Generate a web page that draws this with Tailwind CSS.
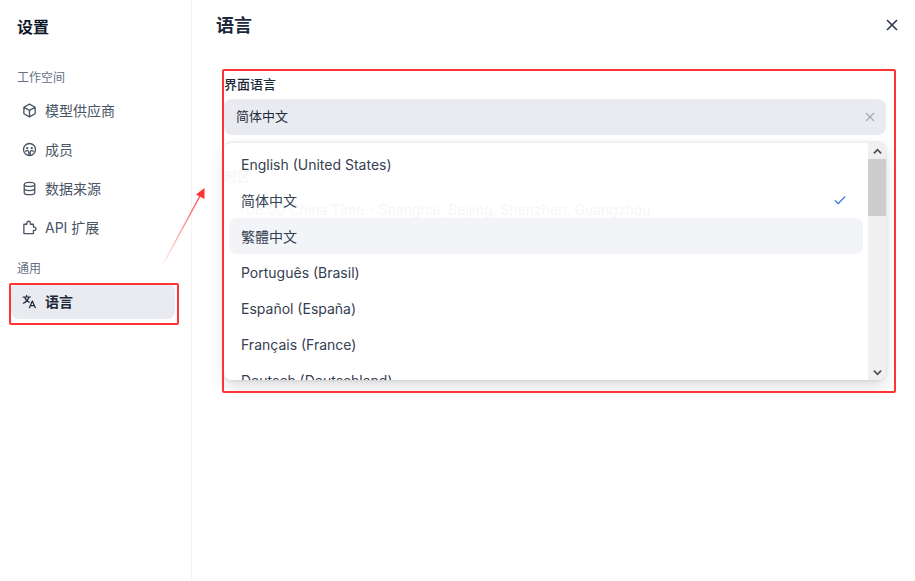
<!DOCTYPE html>
<html lang="zh">
<head>
<meta charset="utf-8">
<script src="https://cdn.jsdelivr.net/npm/@tailwindcss/browser@4"></script>
</head>
<body class="bg-white">
<div class="relative flex h-[581px] w-[915px] overflow-hidden bg-white font-['Inter','Noto_Sans_CJK_SC',sans-serif] text-[#354052]">
  <!-- sidebar -->
  <aside class="flex w-[192px] shrink-0 flex-col border-r border-[#f2f4f7] pl-[12px] pr-[16px]">
    <h2 class="mt-[16px] ml-[5px] text-[16px] leading-[22px] font-semibold text-[#101828]">设置</h2>
    <div class="mt-[30px] ml-[5px] text-[12px] leading-[20px] text-[#667085]">工作空间</div>
    <nav class="mt-[4px] flex flex-col gap-[3px]">
      <a class="flex h-[36px] items-center gap-[8px] pl-[10px] text-[14px] text-[#495464]">
        <svg class="size-[15px] shrink-0" viewBox="0 0 16 16" fill="none" stroke="#495464" stroke-width="1.4" stroke-linejoin="round"><path d="M8 1.2l6 3.3v7L8 14.8l-6-3.3v-7zM2 4.5l6 3.4 6-3.4M8 7.9v6.9"/></svg>
        <span>模型供应商</span>
      </a>
      <a class="flex h-[36px] items-center gap-[8px] pl-[10px] text-[14px] text-[#495464]">
        <svg class="size-[15px] shrink-0" viewBox="0 0 16 16" fill="none" stroke="#495464" stroke-width="1.4"><circle cx="8" cy="8" r="6.4"/><circle cx="5.6" cy="6.6" r="1.2" fill="#495464" stroke="none"/><circle cx="10.4" cy="6.6" r="1.2" fill="#495464" stroke="none"/><path d="M3.4 10.2c1.5-1.3 2.6-1.3 3.4-.6.5.5.5 3 .3 4.6M12.6 10.2c-1.5-1.3-2.6-1.3-3.4-.6-.5.5-.5 3-.3 4.6"/></svg>
        <span>成员</span>
      </a>
      <a class="flex h-[36px] items-center gap-[8px] pl-[10px] text-[14px] text-[#495464]">
        <svg class="size-[15px] shrink-0" viewBox="0 0 16 16" fill="none" stroke="#495464" stroke-width="1.4"><ellipse cx="8" cy="3.6" rx="5.6" ry="2.2"/><path d="M2.4 3.6v8.8c0 1.2 2.5 2.2 5.6 2.2s5.6-1 5.6-2.2V3.6M2.4 8c0 1.2 2.5 2.2 5.6 2.2s5.6-1 5.6-2.2"/></svg>
        <span>数据来源</span>
      </a>
      <a class="flex h-[36px] items-center gap-[8px] pl-[10px] text-[14px] text-[#495464]">
        <svg class="size-[15px] shrink-0" viewBox="0 0 16 16" fill="none" stroke="#495464" stroke-width="1.4" stroke-linejoin="round"><path d="M2 4.5h3.2V3.2a1.9 1.9 0 013.8 0v1.3h3.2v3h1a1.8 1.8 0 010 3.6h-1v3.4H2z"/></svg>
        <span>API 扩展</span>
      </a>
    </nav>
    <div class="mt-[14px] ml-[5px] text-[12px] leading-[20px] text-[#667085]">通用</div>
    <a class="mt-[4px] flex h-[36px] w-[164px] -ml-[1px] items-center gap-[8px] rounded-[8px] bg-[#e9ebf0] pl-[11px] text-[14px] font-semibold text-[#1d2939]">
      <svg class="size-[15px] shrink-0" viewBox="0 0 16 16" fill="none" stroke="#1d2939" stroke-width="1.3" stroke-linecap="round" stroke-linejoin="round"><path d="M1 3.2h8M5 1.4v1.8M7.4 3.2C6.6 6.2 4.2 8.6 1.4 9.8M2.8 3.2c.8 2.6 2.6 4.6 5 5.6M8 14.6l3-7.2 3.2 7.2M9 12.4h4.2"/></svg>
      <span>语言</span>
    </a>
  </aside>

  <!-- main -->
  <main class="relative flex-1 pl-[24px] pr-[29px]">
    <h1 class="mt-[14px] text-[18px] leading-[24px] font-semibold text-[#1d2939]">语言</h1>
    <div class="mt-[36px] ml-[8px]">
      <label class="block text-[13px] leading-[20px] font-medium text-[#1d2939]">界面语言</label>
      <div class="mt-[5px] flex h-[36px] items-center justify-between rounded-[8px] bg-[#e9ebf0] pl-[12px] pr-[11px] text-[13px] text-[#1d2939]">
        <span>简体中文</span>
        <svg class="size-[10px]" viewBox="0 0 10 10" fill="none" stroke="#a4a7ae" stroke-width="1.1"><path d="M1 1l8 8M9 1l-8 8"/></svg>
      </div>
      <div class="mt-[31px] text-[13px] leading-[20px] font-medium text-[#1d2939]">时区</div>
      <div class="mt-[14px] pl-[13px] text-[14px] leading-[20px] text-[#354052]">+08:00 China Time - Shanghai, Beijing, Shenzhen, Guangzhou</div>
    </div>
    <!-- dropdown -->
    <div class="absolute top-[141px] left-[32px] flex h-[239px] w-[662px] overflow-hidden rounded-[8px] border-t-2 border-[#f0f0f0] bg-white/95 shadow-[0_8px_16px_rgba(0,0,0,0.12),0_1px_3px_rgba(0,0,0,0.1)]">
      <ul class="flex-1 overflow-hidden px-[5px] pt-[3px] text-[14px] text-[#354052]">
        <li class="flex h-[36px] shrink-0 items-center px-[12px]">English (United States)</li>
        <li class="flex h-[36px] shrink-0 items-center justify-between px-[12px] pr-[16px]">
          <span>简体中文</span>
          <svg class="size-[14px]" viewBox="0 0 14 14" fill="none" stroke="#1f6feb" stroke-width="1.3"><path d="M2 7.4l3.2 3.2L12 3.6"/></svg>
        </li>
        <li class="flex h-[36px] shrink-0 items-center rounded-[8px] bg-[#f2f4f7] px-[12px]">繁體中文</li>
        <li class="flex h-[36px] shrink-0 items-center px-[12px]">Português (Brasil)</li>
        <li class="flex h-[36px] shrink-0 items-center px-[12px]">Español (España)</li>
        <li class="flex h-[36px] shrink-0 items-center px-[12px]">Français (France)</li>
        <li class="flex h-[36px] shrink-0 items-center px-[12px]">Deutsch (Deutschland)</li>
      </ul>
      <div class="flex w-[18px] shrink-0 flex-col bg-[#f0f0f0]">
        <div class="flex h-[16px] shrink-0 items-center justify-center">
          <svg class="size-[9px]" viewBox="0 0 10 10" fill="none" stroke="#505050" stroke-width="2"><path d="M1 7l4-4 4 4"/></svg>
        </div>
        <div class="h-[57px] shrink-0 bg-[#cdcdcd]"></div>
        <div class="flex-1"></div>
        <div class="flex h-[16px] shrink-0 items-center justify-center">
          <svg class="size-[9px]" viewBox="0 0 10 10" fill="none" stroke="#505050" stroke-width="2"><path d="M1 3l4 4 4-4"/></svg>
        </div>
      </div>
    </div>
  </main>

  <!-- close -->
  <button class="absolute top-[17px] right-[15px] flex size-[16px] items-center justify-center">
    <svg class="size-[12px]" viewBox="0 0 12 12" fill="none" stroke="#354052" stroke-width="1.7"><path d="M1 1l10 10M11 1L1 11"/></svg>
  </button>

  <!-- annotations -->
  <div class="pointer-events-none absolute top-[283px] left-[9px] h-[42px] w-[170px] rounded-[2px] border-2 border-[#ff3333]"></div>
  <div class="pointer-events-none absolute top-[69px] left-[222px] h-[324px] w-[674px] rounded-[2px] border-2 border-[#ff3333]"></div>
  <svg class="pointer-events-none absolute top-[180px] left-[155px] h-[95px] w-[55px]" viewBox="0 0 55 95" fill="none">
    <defs><linearGradient id="a" x1="6" y1="88" x2="49" y2="8" gradientUnits="userSpaceOnUse"><stop offset="0" stop-color="#ff3333" stop-opacity="0"/><stop offset="1" stop-color="#ff3333"/></linearGradient></defs>
    <path d="M6 88L45.5 15" stroke="url(#a)" stroke-width="1.4"/>
    <path d="M49.5 8L49.5 19L41 14.5z" fill="#ff3333"/>
  </svg>
</div>
</body>
</html>
